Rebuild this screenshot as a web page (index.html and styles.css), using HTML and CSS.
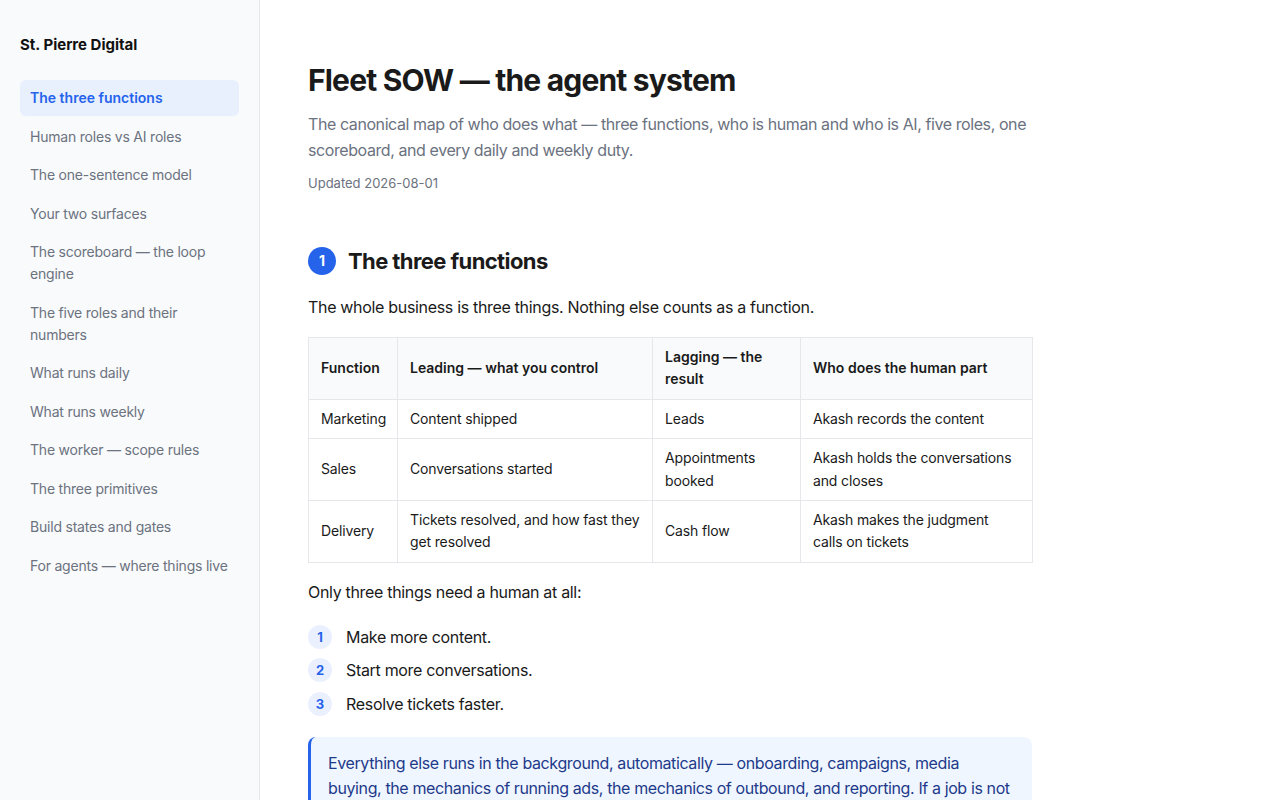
FILE: index.html
```html
<!DOCTYPE html>
<html lang="en">
<head>
<meta charset="utf-8">
<title>Fleet SOW — the agent system</title>
<link rel="stylesheet" href="styles.css">
</head>
<body>
<div class="layout">
  <aside class="sidebar">
    <div class="brand">St. Pierre Digital</div>
    <nav class="nav">
      <a class="nav-item active">The three functions</a>
      <a class="nav-item">Human roles vs AI roles</a>
      <a class="nav-item">The one-sentence model</a>
      <a class="nav-item">Your two surfaces</a>
      <a class="nav-item">The scoreboard — the loop engine</a>
      <a class="nav-item">The five roles and their numbers</a>
      <a class="nav-item">What runs daily</a>
      <a class="nav-item">What runs weekly</a>
      <a class="nav-item">The worker — scope rules</a>
      <a class="nav-item">The three primitives</a>
      <a class="nav-item">Build states and gates</a>
      <a class="nav-item">For agents — where things live</a>
    </nav>
  </aside>
  <main class="main">
    <div class="content">
      <header class="page-head">
        <h1 class="title">Fleet SOW — the agent system</h1>
        <p class="subtitle">The canonical map of who does what — three functions, who is human and who is AI, five roles, one scoreboard, and every daily and weekly duty.</p>
        <p class="updated">Updated 2026-08-01</p>
      </header>

      <section class="section">
        <h2 class="section-title"><span class="sec-num">1</span>The three functions</h2>
        <p class="para">The whole business is three things. Nothing else counts as a function.</p>
        <table class="table">
          <colgroup>
            <col class="c1"><col class="c2"><col class="c3"><col class="c4">
          </colgroup>
          <thead>
            <tr>
              <th>Function</th>
              <th>Leading — what you control</th>
              <th>Lagging — the result</th>
              <th>Who does the human part</th>
            </tr>
          </thead>
          <tbody>
            <tr>
              <td>Marketing</td>
              <td>Content shipped</td>
              <td>Leads</td>
              <td>Akash records the content</td>
            </tr>
            <tr>
              <td>Sales</td>
              <td>Conversations started</td>
              <td>Appointments booked</td>
              <td>Akash holds the conversations and closes</td>
            </tr>
            <tr>
              <td>Delivery</td>
              <td>Tickets resolved, and how fast they get resolved</td>
              <td>Cash flow</td>
              <td>Akash makes the judgment calls on tickets</td>
            </tr>
          </tbody>
        </table>
        <p class="para para-after">Only three things need a human at all:</p>
        <ol class="steps">
          <li class="step"><span class="step-num">1</span>Make more content.</li>
          <li class="step"><span class="step-num">2</span>Start more conversations.</li>
          <li class="step"><span class="step-num">3</span>Resolve tickets faster.</li>
        </ol>
        <div class="callout">Everything else runs in the background, automatically — onboarding, campaigns, media buying, the mechanics of running ads, the mechanics of outbound, and reporting. If a job is not one of those three, it belongs to an agent and not to a human, and nobody should be spending their day on it.</div>
      </section>
    </div>
  </main>
</div>
</body>
</html>
```

FILE: styles.css
```css
* { box-sizing: border-box; }
html, body { margin: 0; padding: 0; }
body {
  font-family: Inter, "Noto Sans", "Liberation Sans", sans-serif;
  color: #1a1a1a;
  background: #ffffff;
  height: 800px;
  overflow: hidden;
  letter-spacing: -0.02em;
}
.layout {
  display: flex;
  height: 800px;
}
.sidebar {
  width: 260px;
  flex: 0 0 260px;
  background: #f9fafb;
  border-right: 1px solid #e5e7eb;
  padding: 33px 20px 0 20px;
}
.brand {
  font-size: 15px;
  font-weight: 700;
  line-height: 24px;
  color: #111111;
  margin-bottom: 23px;
  letter-spacing: 0;
}
.nav {
  display: flex;
  flex-direction: column;
  gap: 2.5px;
}
.nav-item {
  display: block;
  padding: 7px 10px;
  font-size: 14px;
  line-height: 22px;
  color: #6b7280;
  border-radius: 6px;
  text-decoration: none;
  letter-spacing: -0.015em;
}
.nav-item.active {
  background: #e8f0fe;
  color: #2563eb;
  font-weight: 600;
  letter-spacing: 0;
}
.main {
  flex: 1;
  padding: 62px 48px 0 48px;
  overflow: hidden;
}
.content {
  width: 724px;
}
.title {
  margin: 0;
  font-size: 30px;
  line-height: 36px;
  font-weight: 700;
  letter-spacing: -0.027em;
  color: #1a1a1a;
}
.subtitle {
  margin: 13px 0 0 0;
  font-size: 16px;
  line-height: 26px;
  color: #6b7280;
  letter-spacing: -0.026em;
}
.updated {
  margin: 10px 0 0 0;
  font-size: 13px;
  line-height: 20px;
  color: #6b7280;
  letter-spacing: 0;
}
.section {
  padding-top: 54px;
}
.section-title {
  display: flex;
  align-items: center;
  gap: 12px;
  margin: 0;
  font-size: 22px;
  line-height: 28px;
  font-weight: 700;
  letter-spacing: -0.027em;
  color: #1a1a1a;
}
.sec-num {
  width: 28px;
  height: 28px;
  border-radius: 50%;
  background: #2563eb;
  color: #ffffff;
  font-size: 14px;
  font-weight: 700;
  display: inline-flex;
  align-items: center;
  justify-content: center;
  letter-spacing: 0;
}
.para {
  margin: 19px 0 0 0;
  font-size: 16px;
  line-height: 26px;
  color: #1a1a1a;
}
.table {
  margin-top: 17px;
  width: 724px;
  border-collapse: collapse;
  table-layout: fixed;
  font-size: 14px;
  line-height: 22.4px;
}
.c1 { width: 89px; }
.c2 { width: 255px; }
.c3 { width: 148px; }
.c4 { width: 232px; }
.table th, .table td {
  border: 1px solid #e5e7eb;
  padding: 8px 12px;
  text-align: left;
  vertical-align: middle;
}
.table th {
  background: #f9fafb;
  font-weight: 600;
  color: #1a1a1a;
  letter-spacing: 0;
}
.table td {
  color: #1a1a1a;
  letter-spacing: -0.01em;
}
.para-after {
  margin-top: 16px;
}
.steps {
  list-style: none;
  margin: 20px 0 0 0;
  padding: 0;
  display: flex;
  flex-direction: column;
  gap: 9.5px;
}
.step {
  display: flex;
  align-items: center;
  gap: 14px;
  font-size: 16px;
  line-height: 24px;
  color: #1a1a1a;
}
.step-num {
  width: 24px;
  height: 24px;
  flex: 0 0 24px;
  border-radius: 50%;
  background: #eaf0fe;
  color: #2563eb;
  font-size: 13px;
  font-weight: 700;
  display: inline-flex;
  align-items: center;
  justify-content: center;
  letter-spacing: 0;
}
.callout {
  margin-top: 21px;
  background: #eff6ff;
  border-left: 3px solid #2563eb;
  border-radius: 8px;
  padding: 14px 17px 13px 17px;
  font-size: 16px;
  line-height: 25px;
  color: #1e3a8a;
  letter-spacing: -0.024em;
}
```
